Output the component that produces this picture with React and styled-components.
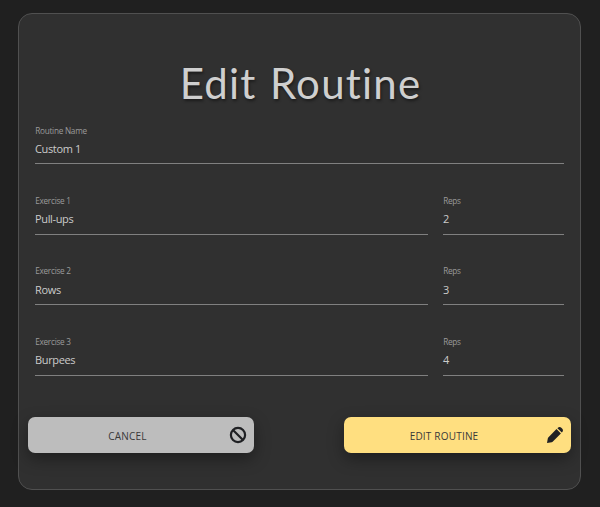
import React from "react";
import styled, { createGlobalStyle } from "styled-components";

const GlobalStyle = createGlobalStyle`
  * { box-sizing: border-box; }
  body { margin: 0; background: #202020; font-family: "Open Sans", "Noto Sans", sans-serif; }
`;

const Page = styled.main`
  height: 507px;
  padding: 13px 19px 17px 18px;
  overflow: hidden;
`;

const Panel = styled.form`
  height: 477px;
  padding: 46px 9px 0;
  border: 1px solid #505050;
  border-radius: 14px;
  background: #303030;
`;

const Title = styled.h1`
  margin: 0;
  height: 63.4px;
  padding-left: 2px;
  line-height: 47px;
  font-family: Lato, "Noto Sans", sans-serif;
  font-size: 42px;
  font-weight: 400;
  letter-spacing: 1.2px;
  word-spacing: 1.5px;
  text-align: center;
  white-space: nowrap;
  color: #cfcfcf;
  text-shadow: 1px 2px 3px rgba(0, 0, 0, 0.45);
`;

const Fields = styled.div`
  display: grid;
  row-gap: 29.4px;
  padding: 0 7px;
`;

const Row = styled.div`
  display: grid;
  grid-template-columns: ${(p) => (p.$single ? "1fr" : "393px 121px")};
  justify-content: space-between;
`;

const Field = styled.label`
  display: block;
  height: 41px;
  padding-top: 1.2px;
  border-bottom: 1px solid #808080;
`;

const Caption = styled.span`
  display: block;
  height: 15.4px;
  line-height: 11px;
  font-size: 8.2px;
  letter-spacing: -0.25px;
  padding-left: 0.2px;
  color: #9b9b9b;
`;

const Value = styled.span`
  display: block;
  line-height: 17px;
  font-size: 11px;
  letter-spacing: -0.35px;
  color: #cbcbcb;
`;

const Actions = styled.div`
  display: flex;
  justify-content: space-between;
  margin-top: 41.2px;
`;

const Button = styled.button`
  display: flex;
  align-items: center;
  width: ${(p) => p.$width}px;
  height: 36.6px;
  padding: 0 7px 0 0;
  border: 0;
  border-radius: 7px;
  background: ${(p) => p.$color};
  color: #202124;
  box-shadow: 0 6px 16px rgba(0, 0, 0, 0.36);
  font: 400 10px "Open Sans", "Noto Sans", sans-serif;
`;

const ButtonText = styled.span`
  flex: 1;
  padding: 2px 2px 0 0;
  color: #393939;
  text-align: center;
  letter-spacing: 0.2px;
`;

const Icon = styled.svg`
  flex: none;
  width: 18px;
  height: 18px;
`;

function BanIcon() {
  return (
    <Icon viewBox="0 0 18 18" fill="none" stroke="currentColor" strokeWidth="2.2">
      <circle cx="9" cy="9" r="7.1" />
      <path d="M4 4l10 10" />
    </Icon>
  );
}

function PencilIcon() {
  return (
    <Icon viewBox="0 0 18 18" fill="currentColor">
      <path d="M1 17l.8-4.6q.2-.7.7-1.2L10.5 3.1l4.4 4.4-8 8q-.5.5-1.2.7z" />
      <path d="M11.4 2.2l.5-.5c1-.9 2.5-.9 3.4 0l1 1c.9.9.9 2.4 0 3.4l-.5.5z" />
    </Icon>
  );
}

const exercises = [
  { name: "Pull-ups", reps: 2 },
  { name: "Rows", reps: 3 },
  { name: "Burpees", reps: 4 },
];

function TextField({ label, value }) {
  return (
    <Field>
      <Caption>{label}</Caption>
      <Value>{value}</Value>
    </Field>
  );
}

export default function App() {
  return (
    <>
      <GlobalStyle />
      <Page>
        <Panel>
          <Title>Edit Routine</Title>
          <Fields>
            <Row $single>
              <TextField label="Routine Name" value="Custom 1" />
            </Row>
            {exercises.map((exercise, i) => (
              <Row key={exercise.name}>
                <TextField label={`Exercise ${i + 1}`} value={exercise.name} />
                <TextField label="Reps" value={exercise.reps} />
              </Row>
            ))}
          </Fields>
          <Actions>
            <Button type="button" $width={226} $color="#bdbdbd">
              <ButtonText>CANCEL</ButtonText>
              <BanIcon />
            </Button>
            <Button type="button" $width={227} $color="#ffdf80">
              <ButtonText>EDIT ROUTINE</ButtonText>
              <PencilIcon />
            </Button>
          </Actions>
        </Panel>
      </Page>
    </>
  );
}
